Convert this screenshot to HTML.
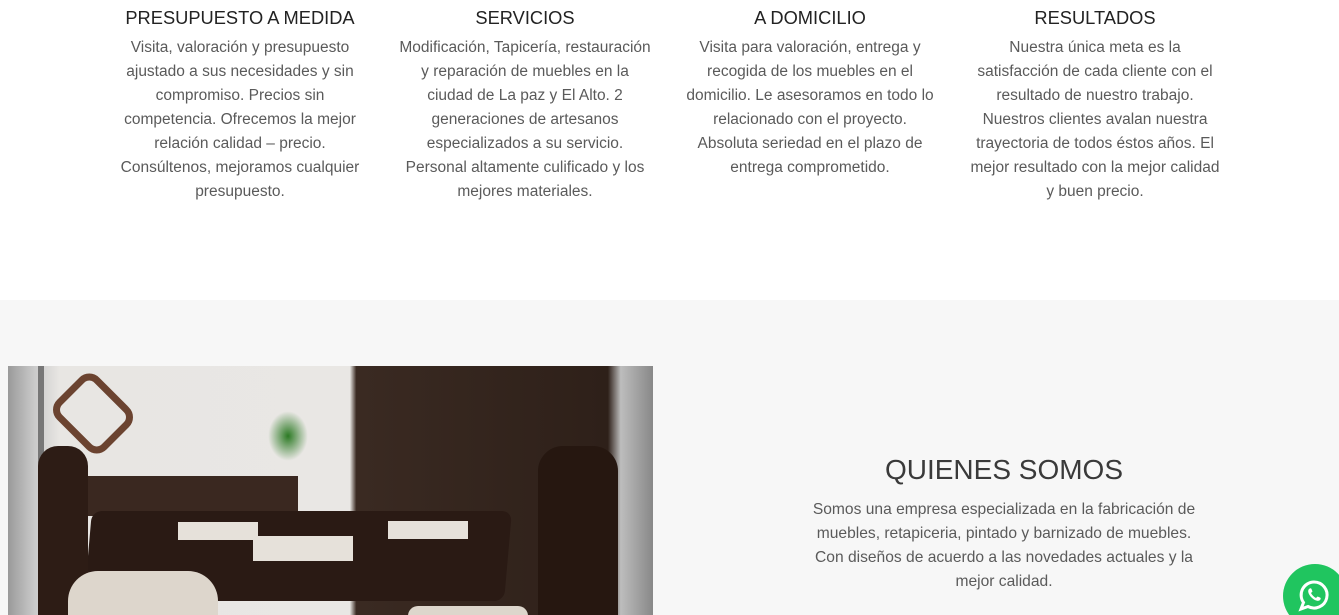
<!DOCTYPE html>
<html style="overflow:hidden;height:615px"><head><meta charset="utf-8"><style>
*{margin:0;padding:0;box-sizing:border-box}
body{width:1339px;height:615px;overflow:hidden;background:#fff;font-family:"Liberation Sans",sans-serif;position:relative}
.col{position:absolute;top:6px;width:290px;text-align:center}
.col h3{font-weight:normal;font-size:18.3px;color:#222;line-height:24px;margin-bottom:6px}
.col p{font-size:15.5px;line-height:24px;color:#5a5a5a}
.gray{position:absolute;top:300px;left:0;width:1339px;height:315px;background:#f7f7f7}
.img{position:absolute;left:8px;top:366px;width:645px;height:249px;overflow:hidden;background:linear-gradient(90deg,#9a9a9a 0,#c9c9c9 4%,#e8e6e3 8%,#e9e7e4 53%,#3a2a22 54%,#2e2019 93%,#bdbdbd 95%,#888 100%)}
.qs{position:absolute;left:774px;width:460px;top:450px;text-align:center}
.qs h2{font-weight:normal;font-size:28px;color:#3a3a3a;line-height:40px;margin-bottom:8px}
.qs p{font-size:15.6px;line-height:24px;color:#5a5a5a}
.wa{position:absolute;left:1283px;top:564px;width:64px;height:64px;border-radius:50%;background:#20c55f}
</style></head><body>
<div class="col" style="left:95px"><h3>PRESUPUESTO A MEDIDA</h3><p>Visita, valoración y presupuesto<br>ajustado a sus necesidades y sin<br>compromiso. Precios sin<br>competencia. Ofrecemos la mejor<br>relación calidad – precio.<br>Consúltenos, mejoramos cualquier<br>presupuesto.</p></div>
<div class="col" style="left:380px"><h3>SERVICIOS</h3><p>Modificación, Tapicería, restauración<br>y reparación de muebles en la<br>ciudad de La paz y El Alto. 2<br>generaciones de artesanos<br>especializados a su servicio.<br>Personal altamente culificado y los<br>mejores materiales.</p></div>
<div class="col" style="left:665px"><h3>A DOMICILIO</h3><p>Visita para valoración, entrega y<br>recogida de los muebles en el<br>domicilio. Le asesoramos en todo lo<br>relacionado con el proyecto.<br>Absoluta seriedad en el plazo de<br>entrega comprometido.</p></div>
<div class="col" style="left:950px"><h3>RESULTADOS</h3><p>Nuestra única meta es la<br>satisfacción de cada cliente con el<br>resultado de nuestro trabajo.<br>Nuestros clientes avalan nuestra<br>trayectoria de todos éstos años. El<br>mejor resultado con la mejor calidad<br>y buen precio.</p></div>
<div class="gray"></div>
<div class="img">
 <div style="position:absolute;left:30px;top:0;width:6px;height:249px;background:#777"></div>
 <div style="position:absolute;left:35px;top:5px;width:100px;height:85px;border:10px solid #6b4330;transform:rotate(45deg) scale(.7);border-radius:20px"></div>
 <div style="position:absolute;left:260px;top:45px;width:40px;height:50px;background:radial-gradient(#2c7a24,transparent 70%)"></div>
 <div style="position:absolute;left:60px;top:110px;width:230px;height:40px;background:#3a2820"></div>
 <div style="position:absolute;left:80px;top:145px;width:420px;height:90px;background:#2a1a14;border-radius:10px;transform:skewX(-5deg)"></div>
 <div style="position:absolute;left:30px;top:80px;width:50px;height:169px;background:#2d1c15;border-radius:20px 20px 0 0"></div>
 <div style="position:absolute;left:60px;top:205px;width:150px;height:44px;background:#ddd6cc;border-radius:30px 30px 0 0"></div>
 <div style="position:absolute;left:245px;top:170px;width:100px;height:25px;background:#e6e1da"></div>
 <div style="position:absolute;left:170px;top:156px;width:80px;height:18px;background:#e6e1da"></div>
 <div style="position:absolute;left:380px;top:155px;width:80px;height:18px;background:#e6e1da"></div>
 <div style="position:absolute;left:530px;top:80px;width:80px;height:169px;background:#261710;border-radius:25px 25px 0 0"></div>
 <div style="position:absolute;left:400px;top:240px;width:120px;height:20px;background:#ddd6cc;border-radius:20px"></div>
</div>
<div class="qs"><h2>QUIENES SOMOS</h2><p>Somos una empresa especializada en la fabricación de<br>muebles, retapiceria, pintado y barnizado de muebles.<br>Con diseños de acuerdo a las novedades actuales y la<br>mejor calidad.</p></div>
<div class="wa"><svg width="64" height="64" viewBox="0 0 64 64"><path d="M31 18a13 13 0 1 1-6 24.5L18 45l2.5-6.5A13 13 0 0 1 31 18z" fill="none" stroke="#fff" stroke-width="3"/><path d="M26 25c1-1 2-1 2.5 0l1 2.5-1.5 1.5c1 2 3 4 5 5l1.5-1.5 2.5 1c1 .5 1 1.5 0 2.5-2 2-6 0-8.5-2.5S24 27 26 25z" fill="#fff"/></svg></div>
</body></html>
